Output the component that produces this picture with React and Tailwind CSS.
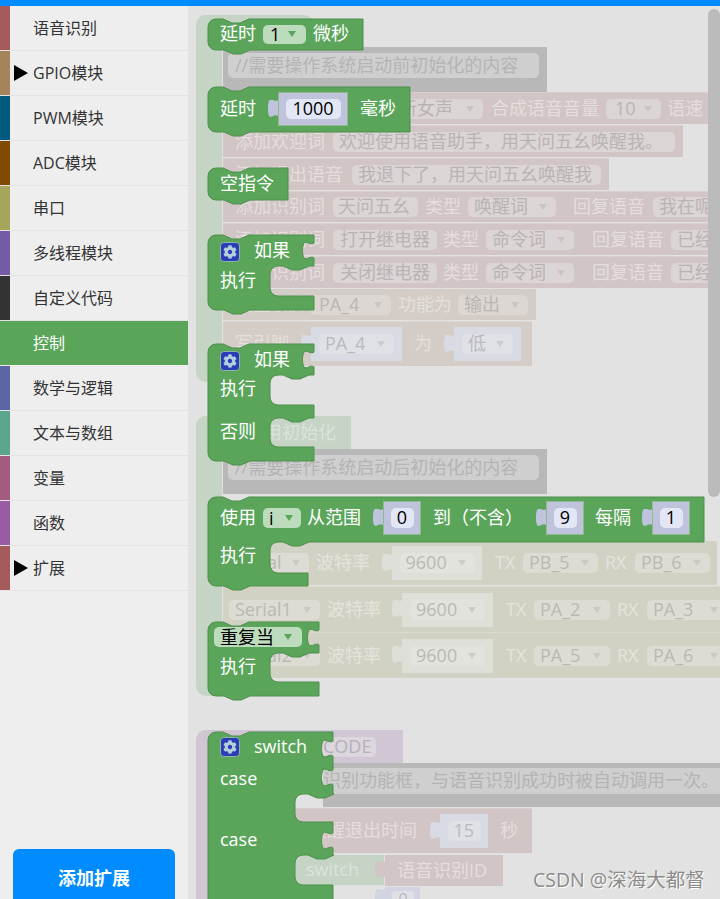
import React from 'react'
import { FaCog } from 'react-icons/fa'

const categories = [
  { name: '语音识别', swatch: 'bg-[#a55b5b]' },
  { name: 'GPIO模块', swatch: 'bg-[#a5835b]', arrow: true },
  { name: 'PWM模块', swatch: 'bg-[#005a80]' },
  { name: 'ADC模块', swatch: 'bg-[#804a00]' },
  { name: '串口', swatch: 'bg-[#a5a55b]' },
  { name: '多线程模块', swatch: 'bg-[#745ba5]' },
  { name: '自定义代码', swatch: 'bg-[#333333]' },
  { name: '控制', swatch: 'bg-[#5ba55b]', active: true },
  { name: '数学与逻辑', swatch: 'bg-[#5b67a5]' },
  { name: '文本与数组', swatch: 'bg-[#5ba58c]' },
  { name: '变量', swatch: 'bg-[#a55b80]' },
  { name: '函数', swatch: 'bg-[#995ba5]' },
  { name: '扩展', swatch: 'bg-[#a55b5b]', arrow: true },
]

// block outline in page coordinates, same notch everywhere
const shape = ({ top, right, segs, bottom }) => {
  let r = right
  let d = `M208 ${top + 8} a8 8 0 0 1 8 -8 h7 l9 4 h8 l9 -4 H${r} `
  segs.forEach((s) => {
    if (s.tab) {
      d += `V${s.tab} c-3 3 -8 -3 -10 0 c-2 4 -2 11 0 15 c2 3 7 -3 10 0 `
    }
    if (s.arm) {
      const x = s.inner
      d += `V${s.arm} H${x + 39} l-9 4 h-8 l-9 -4 H${x + 8} a8 8 0 0 0 -8 8 V${s.to - 8} a8 8 0 0 0 8 8 `
      r = s.right || r
      d += `H${r} `
    }
  })
  d += `V${bottom} H250 l-9 4 h-8 l-9 -4 H216 a8 8 0 0 1 -8 -8 Z`
  return d
}

const blocks = [
  { top: 19, right: 363, segs: [], bottom: 50 },
  { top: 87, right: 410, segs: [], bottom: 132 },
  { top: 168, right: 288, segs: [], bottom: 200 },
  { top: 235, right: 314, segs: [{ tab: 243 }, { arm: 266, inner: 270, to: 296 }], bottom: 310 },
  { top: 344, right: 314, segs: [{ tab: 352 }, { arm: 375, inner: 270, to: 405 }, { arm: 418, inner: 270, to: 447 }], bottom: 461 },
  { top: 497, right: 704, segs: [{ arm: 542, inner: 270, to: 573, right: 308 }], bottom: 586 },
  { top: 622, right: 319, segs: [{ tab: 630 }, { arm: 653, inner: 270, to: 682 }], bottom: 696 },
  { top: 732, right: 333, segs: [{ tab: 741 }, { tab: 770 }, { arm: 794, inner: 295, to: 822 }, { tab: 833 }, { arm: 855, inner: 295, to: 885 }], bottom: 930 },
]

const Arrow = ({ className = '' }) => (
  <svg width="8" height="6" viewBox="0 0 8 6" className={`shrink-0 fill-current ${className}`}>
    <path d="M0 0h8l-4 6z" />
  </svg>
)

const Tab = ({ className = '' }) => (
  <svg width="10" height="17" viewBox="0 0 10 17" className={`shrink-0 -mt-[2px] ${className}`}>
    <path d="M10 0c-3 3-7-3-9 1c-1.500 4-1.500 11 0 15c2 3 6-3 9 0z" />
  </svg>
)

const Label = ({ className = '', children }) => (
  <span className={`shrink-0 whitespace-nowrap pb-[2px] text-[18px] leading-[26px] ${className}`}>{children}</span>
)

// faded dropdown or text box inside a dimmed row
const Field = ({ className = '', text, arrow }) => (
  <div className={`flex h-[20px] shrink-0 items-center justify-between rounded-[5px] pl-[6px] pr-[9px] ${className}`}>
    <span className="whitespace-nowrap pb-[2px] text-[18px] leading-[20px]">{text}</span>
    {arrow && <Arrow className="opacity-50" />}
  </div>
)

const Row = ({ className = '', children }) => (
  <div className={`absolute flex items-center overflow-hidden ${className}`}>{children}</div>
)

// number socket on a green block
const Num = ({ className = '', w = 'w-[38px]', field = 'w-[23px]', h = 'h-[34px]', children }) => (
  <div className={`flex shrink-0 items-center ${className}`}>
    <Tab className="fill-[#bfc3dc]" />
    <div className={`flex items-center justify-center border border-[#8fb98f] bg-[#bfc3dc] ${w} ${h}`}>
      <div className={`flex h-[20px] items-center justify-center rounded-[5px] bg-[#e3e6f4] pb-[1px] text-[18px] text-black ${field}`}>{children}</div>
    </div>
  </div>
)

const Gear = ({ className = '' }) => (
  <div className={`absolute flex h-[20px] w-[20px] items-center justify-center rounded-[4px] border border-[#8db5a5] bg-[#2a3cb8] text-[#b4cfdc] ${className}`}>
    <FaCog size={14} />
  </div>
)

const Text = ({ className = '', children }) => (
  <span className={`absolute whitespace-nowrap text-[18px] leading-[26px] text-white ${className}`}>{children}</span>
)

const DimValue = ({ className = '', block, fieldClass, tone, text, arrow }) => (
  <div className={`flex shrink-0 items-center ${className}`}>
    <Tab className={tone.fill} />
    <div className={`flex h-[34px] items-center justify-center ${tone.bg} ${block}`}>
      <Field className={`${tone.field} ${fieldClass}`} text={text} arrow={arrow} />
    </div>
  </div>
)

const lavender = { fill: 'fill-[#d9dbe4]', bg: 'bg-[#d9dbe4]', field: 'bg-[#e0e1e7] text-[#b9b9bf]' }
const chalk = { fill: 'fill-[#dfdfd9]', bg: 'bg-[#dfdfd9]', field: 'bg-[#e3e3de] text-[#b9b9b3]' }

const pinkField = 'bg-[#dcd5d5] text-[#b9b4b4]'
const oliveField = 'bg-[#dddcd4] text-[#b9b9b2]'
const beigeField = 'bg-[#dcd7d3] text-[#b9b6b3]'

const Sidebar = () => (
  <div className="flex h-[893px] w-[188px] shrink-0 flex-col overflow-hidden bg-[#eeeeee]">
    {categories.map((c) => (
      <div
        key={c.name}
        className={`flex h-[45px] shrink-0 items-stretch border-b ${c.active ? 'border-[#eeeeee] bg-[#5ba55b] text-white' : 'border-[#e3e3e3] text-[#333333]'}`}
      >
        <div className={`w-[10px] ${c.swatch}`} />
        <div className="flex w-[23px] items-center pl-[4px]">
          {c.arrow && (
            <svg width="14" height="16" viewBox="0 0 14 16">
              <path d="M0 0l14 8l-14 8z" fill="#000" />
            </svg>
          )}
        </div>
        <span className="self-center text-[16px]">{c.name}</span>
      </div>
    ))}
    <button className="mx-[13px] mt-[258px] h-[58px] shrink-0 rounded-[6px] bg-[#008cff] text-[18px] font-bold text-white">
      添加扩展
    </button>
  </div>
)

const DimBlocks = () => (
  <>
    {/* hat blocks, only their edges show */}
    <div className="absolute left-[8px] top-[9px] h-[367px] w-[26px] rounded-l-[10px] bg-[#c5d4c5]" />
    <div className="absolute left-[8px] top-[9px] h-[30px] w-[118px] rounded-t-[10px] bg-[#c5d4c5]" />
    <div className="absolute left-[8px] top-[410px] h-[280px] w-[26px] rounded-l-[10px] bg-[#c5d4c5]" />
    <div className="absolute left-[8px] top-[410px] flex h-[33px] w-[155px] items-center rounded-tl-[10px] bg-[#c5d4c5] pl-[68px]">
      <Label className="text-[#dbe3db]">用初始化</Label>
    </div>
    <div className="absolute left-[8px] top-[724px] h-[200px] w-[26px] rounded-l-[10px] bg-[#d1c6d4]" />
    <div className="absolute left-[8px] top-[724px] flex h-[33px] w-[207px] items-center rounded-tl-[10px] bg-[#d1c6d4] pl-[126px]">
      <Field className="w-[54px] bg-[#dcd6de] text-[#b6b0b8] !pl-[1px]" text="CODE" />
    </div>

    {/* comments */}
    <Row className="left-[35px] top-[41px] h-[45px] w-[324px] bg-[#b8b8b8]">
      <div className="mb-[8px] ml-[5px] flex h-[25px] w-[311px] items-center rounded-[5px] bg-[#cfcfcf] pl-[7px]">
        <Label className="text-[#b4b4b4]">//需要操作系统启动前初始化的内容</Label>
      </div>
    </Row>
    <Row className="left-[35px] top-[443px] h-[45px] w-[324px] bg-[#b8b8b8]">
      <div className="mb-[8px] ml-[5px] flex h-[25px] w-[311px] items-center rounded-[5px] bg-[#cfcfcf] pl-[7px]">
        <Label className="text-[#b4b4b4]">//需要操作系统启动后初始化的内容</Label>
      </div>
    </Row>

    {/* voice recognition rows */}
    <Row className="left-[35px] top-[86px] h-[32px] w-[485px] border-t border-[#dacfcf] bg-[#d2c5c5] text-[#e4dede]">
      <Field className={`ml-[170px] w-[90px] ${pinkField}`} text="新女声" arrow />
      <Label className="ml-[8px]">合成语音音量</Label>
      <Field className={`ml-[7px] w-[55px] ${pinkField} !pl-[9px]`} text="10" arrow />
      <Label className="ml-[6px]">语速</Label>
    </Row>
    <Row className="left-[35px] top-[119px] h-[32px] w-[460px] border-t border-[#dacfcf] bg-[#d2c5c5] pl-[12px] text-[#e4dede]">
      <Label>添加欢迎词</Label>
      <Field className={`ml-[8px] w-[342px] ${pinkField}`} text="欢迎使用语音助手，用天问五幺唤醒我。" />
    </Row>
    <Row className="left-[35px] top-[152px] h-[32px] w-[386px] border-t border-[#dacfcf] bg-[#d2c5c5] pl-[12px] text-[#e4dede]">
      <Label>添加退出语音</Label>
      <Field className={`ml-[9px] w-[249px] !pr-0 ${pinkField}`} text="我退下了，用天问五幺唤醒我" />
    </Row>
    <Row className="left-[35px] top-[185px] h-[31px] w-[485px] border-t border-[#dacfcf] bg-[#d2c5c5] pl-[12px] text-[#e4dede]">
      <Label>添加识别词</Label>
      <Field className={`ml-[8px] w-[85px] !pl-[5px] !pr-0 ${pinkField}`} text="天问五幺" />
      <Label className="ml-[7px]">类型</Label>
      <Field className={`ml-[7px] w-[88px] ${pinkField}`} text="唤醒词" arrow />
      <Label className="ml-[17px]">回复语音</Label>
      <Field className={`ml-[8px] w-[100px] ${pinkField}`} text="我在呢" />
    </Row>
    <Row className="left-[35px] top-[217px] h-[32px] w-[485px] border-t border-[#dacfcf] bg-[#d2c5c5] pl-[12px] text-[#e4dede]">
      <Label>添加识别词</Label>
      <Field className={`ml-[8px] w-[104px] !pl-[7px] !pr-0 ${pinkField}`} text="打开继电器" />
      <Label className="ml-[6px]">类型</Label>
      <Field className={`ml-[7px] w-[88px] ${pinkField}`} text="命令词" arrow />
      <Label className="ml-[18px]">回复语音</Label>
      <Field className={`ml-[7px] w-[100px] ${pinkField}`} text="已经打开" />
    </Row>
    <Row className="left-[35px] top-[250px] h-[32px] w-[485px] border-t border-[#dacfcf] bg-[#d2c5c5] pl-[12px] text-[#e4dede]">
      <Label>添加识别词</Label>
      <Field className={`ml-[8px] w-[104px] !pl-[7px] !pr-0 ${pinkField}`} text="关闭继电器" />
      <Label className="ml-[6px]">类型</Label>
      <Field className={`ml-[7px] w-[88px] ${pinkField}`} text="命令词" arrow />
      <Label className="ml-[18px]">回复语音</Label>
      <Field className={`ml-[7px] w-[100px] ${pinkField}`} text="已经关闭" />
    </Row>

    {/* GPIO */}
    <Row className="left-[35px] top-[283px] h-[31px] w-[313px] bg-[#d4ccc6] pl-[12px] text-[#e4e0dc]">
      <Label>设置引脚</Label>
      <Field className={`ml-[3px] w-[81px] !pl-[9px] ${beigeField}`} text="PA_4" arrow />
      <Label className="ml-[7px]">功能为</Label>
      <Field className={`ml-[6px] w-[70px] ${beigeField}`} text="输出" arrow />
    </Row>
    <Row className="left-[35px] top-[315px] h-[45px] w-[309px] border-t border-[#dcd5d0] bg-[#d4ccc6] pl-[12px] text-[#e4e0dc]">
      <Label>写引脚</Label>
      <DimValue className="ml-[12px]" block="w-[91px]" fieldClass="w-[75px]" tone={lavender} text="PA_4" arrow />
      <Label className="ml-[12px]">为</Label>
      <DimValue className="ml-[12px]" block="w-[67px]" fieldClass="w-[51px]" tone={lavender} text="低" arrow />
    </Row>

    {/* serial ports */}
    <Row className="left-[35px] top-[535px] h-[44px] w-[494px] bg-[#d2d2c4] text-[#e4e4dc]">
      <Field className={`ml-[6px] w-[80px] ${oliveField}`} text="Serial" arrow />
      <Label className="ml-[7px]">波特率</Label>
      <DimValue className="ml-[12px]" block="w-[90px]" fieldClass="w-[75px]" tone={chalk} text="9600" arrow />
      <Label className="ml-[13px] w-[22px]">TX</Label>
      <Field className={`ml-[6px] w-[75px] ${oliveField}`} text="PB_5" arrow />
      <Label className="ml-[7px] w-[22px]">RX</Label>
      <Field className={`ml-[8px] w-[75px] ${oliveField}`} text="PB_6" arrow />
    </Row>
    <Row className="left-[35px] top-[580px] h-[46px] w-[500px] border-t border-[#dadacf] bg-[#d2d2c4] text-[#e4e4dc]">
      <Field className={`ml-[6px] w-[91px] ${oliveField}`} text="Serial1" arrow />
      <Label className="ml-[7px]">波特率</Label>
      <DimValue className="ml-[11px]" block="w-[91px]" fieldClass="w-[75px]" tone={chalk} text="9600" arrow />
      <Label className="ml-[13px] w-[22px]">TX</Label>
      <Field className={`ml-[6px] w-[76px] ${oliveField}`} text="PA_2" arrow />
      <Label className="ml-[7px] w-[22px]">RX</Label>
      <Field className={`ml-[8px] w-[80px] ${oliveField}`} text="PA_3" arrow />
    </Row>
    <Row className="left-[35px] top-[626px] h-[46px] w-[500px] border-t border-[#dadacf] bg-[#d2d2c4] text-[#e4e4dc]">
      <Field className={`ml-[6px] w-[91px] ${oliveField}`} text="Serial2" arrow />
      <Label className="ml-[7px]">波特率</Label>
      <DimValue className="ml-[11px]" block="w-[91px]" fieldClass="w-[75px]" tone={chalk} text="9600" arrow />
      <Label className="ml-[13px] w-[22px]">TX</Label>
      <Field className={`ml-[6px] w-[76px] ${oliveField}`} text="PA_5" arrow />
      <Label className="ml-[7px] w-[22px]">RX</Label>
      <Field className={`ml-[8px] w-[80px] ${oliveField}`} text="PA_6" arrow />
    </Row>

    {/* under the switch */}
    <Row className="left-[135px] top-[757px] h-[44px] w-[397px] bg-[#b8b8b8]">
      <div className="mb-[8px] flex h-[26px] w-[397px] shrink-0 items-center bg-[#cfcfcf]">
        <Label className="text-[#b4b4b4]">识别功能框，与语音识别成功时被自动调用一次。</Label>
      </div>
    </Row>
    <Row className="left-[85px] top-[802px] h-[45px] w-[259px] border-t border-[#dacfcf] bg-[#d2c5c5] text-[#e4dede]">
      <Label>语音唤醒退出时间</Label>
      <DimValue className="ml-[13px]" block="w-[48px]" fieldClass="w-[33px] !pr-0" tone={lavender} text="15" />
      <Label className="ml-[12px]">秒</Label>
    </Row>
    <div className="absolute left-[107px] top-[849px] flex h-[30px] w-[89px] items-center rounded-l-[8px] bg-[#c5d4c5] pl-[11px]">
      <Label className="text-[#dbe3db]">switch</Label>
    </div>
    <div className="absolute left-[187px] top-[849px] flex h-[31px] items-center">
      <Tab className="fill-[#d2c5c5]" />
      <div className="flex h-[31px] w-[118px] items-center bg-[#d2c5c5] pl-[12px]">
        <Label className="text-[#e4dede]">语音识别ID</Label>
      </div>
    </div>
    <div className="absolute left-[187px] top-[881px] flex items-start">
      <Tab className="mt-[2px] fill-[#d2d4e2]" />
      <div className="h-[20px] w-[35px] bg-[#d2d4e2] pl-[7px] pt-[4px]">
        <div className="h-[14px] w-[22px] rounded-[4px] bg-[#e0e1e7] text-center text-[16px] leading-[16px] text-[#b9b9bf]">0</div>
      </div>
    </div>
  </>
)

const GreenBlocks = () => (
  <>
    <svg className="absolute left-[-188px] top-[-6px] h-[899px] w-[720px]" viewBox="0 0 720 899">
      {blocks.map((b) => (
        <path key={b.top} d={shape(b)} fill="#5ba55b" stroke="#4c8f4c" strokeWidth="1" />
      ))}
    </svg>

    {/* 延时 1 微秒 */}
    <div className="absolute left-[32px] top-[15px] flex h-[26px] items-center text-white">
      <Label>延时</Label>
      <div className="ml-[7px] flex h-[19px] w-[43px] items-center justify-between rounded-[5px] bg-[#bddcbd] pl-[7px] pr-[10px] text-black">
        <span className="text-[18px]">1</span>
        <Arrow className="text-[#5ba55b]" />
      </div>
      <Label className="ml-[7px]">微秒</Label>
    </div>

    {/* 延时 1000 毫秒 */}
    <div className="absolute left-[32px] top-[86px] flex h-[34px] items-center text-white">
      <Label>延时</Label>
      <Num className="ml-[12px]" w="w-[70px]" field="w-[55px]">1000</Num>
      <Label className="ml-[12px]">毫秒</Label>
    </div>

    <Text className="left-[32px] top-[164px]">空指令</Text>

    <Gear className="left-[32px] top-[236px]" />
    <Text className="left-[66px] top-[231px]">如果</Text>
    <Text className="left-[32px] top-[261px]">执行</Text>

    <Gear className="left-[32px] top-[345px]" />
    <Text className="left-[66px] top-[340px]">如果</Text>
    <Text className="left-[32px] top-[369px]">执行</Text>
    <Text className="left-[32px] top-[412px]">否则</Text>

    {/* 使用 i 从范围 */}
    <div className="absolute left-[32px] top-[495px] flex h-[34px] items-center text-white">
      <Label>使用</Label>
      <div className="ml-[7px] flex h-[20px] w-[38px] items-center justify-between rounded-[5px] bg-[#bddcbd] pl-[6px] pr-[8px] text-black">
        <span className="text-[18px]">i</span>
        <Arrow className="text-[#5ba55b]" />
      </div>
      <Label className="ml-[6px]">从范围</Label>
      <Num className="ml-[12px]">0</Num>
      <Label className="ml-[12px]">到（不含）</Label>
      <Num className="ml-[13px]">9</Num>
      <Label className="ml-[11px]">每隔</Label>
      <Num className="ml-[11px]">1</Num>
    </div>
    <Text className="left-[32px] top-[536px]">执行</Text>

    <div className="absolute left-[26px] top-[621px] flex h-[20px] w-[88px] items-center justify-between rounded-[5px] bg-[#bddcbd] pl-[6px] pr-[10px] text-black">
      <span className="text-[18px]">重复当</span>
      <Arrow className="text-[#5ba55b]" />
    </div>
    <Text className="left-[32px] top-[647px]">执行</Text>

    <Gear className="left-[32px] top-[731px]" />
    <Text className="left-[66px] top-[727px]">switch</Text>
    <Text className="left-[32px] top-[759px]">case</Text>
    <Text className="left-[32px] top-[820px]">case</Text>
  </>
)

const App = () => {
  return (
    <div className="flex h-[899px] w-[720px] flex-col overflow-hidden font-['Open_Sans','Noto_Sans_CJK_SC',sans-serif]">
      <div className="h-[6px] shrink-0 bg-[#008cff]" />
      <div className="flex min-h-0 flex-1">
        <Sidebar />
        <div className="relative flex-1 overflow-hidden bg-[#e2e2e2]">
          <DimBlocks />
          <GreenBlocks />
          <div className="absolute left-[520px] top-[3px] h-[488px] w-[12px] rounded-full bg-[#bbbbbb]" />
          <span className="absolute left-[345px] top-[860px] whitespace-nowrap text-[19.5px] leading-[28px] text-[#8c8c8c] [text-shadow:1px_1px_0_#ffffff]">
            CSDN @深海大都督
          </span>
        </div>
      </div>
    </div>
  )
}

export default App
